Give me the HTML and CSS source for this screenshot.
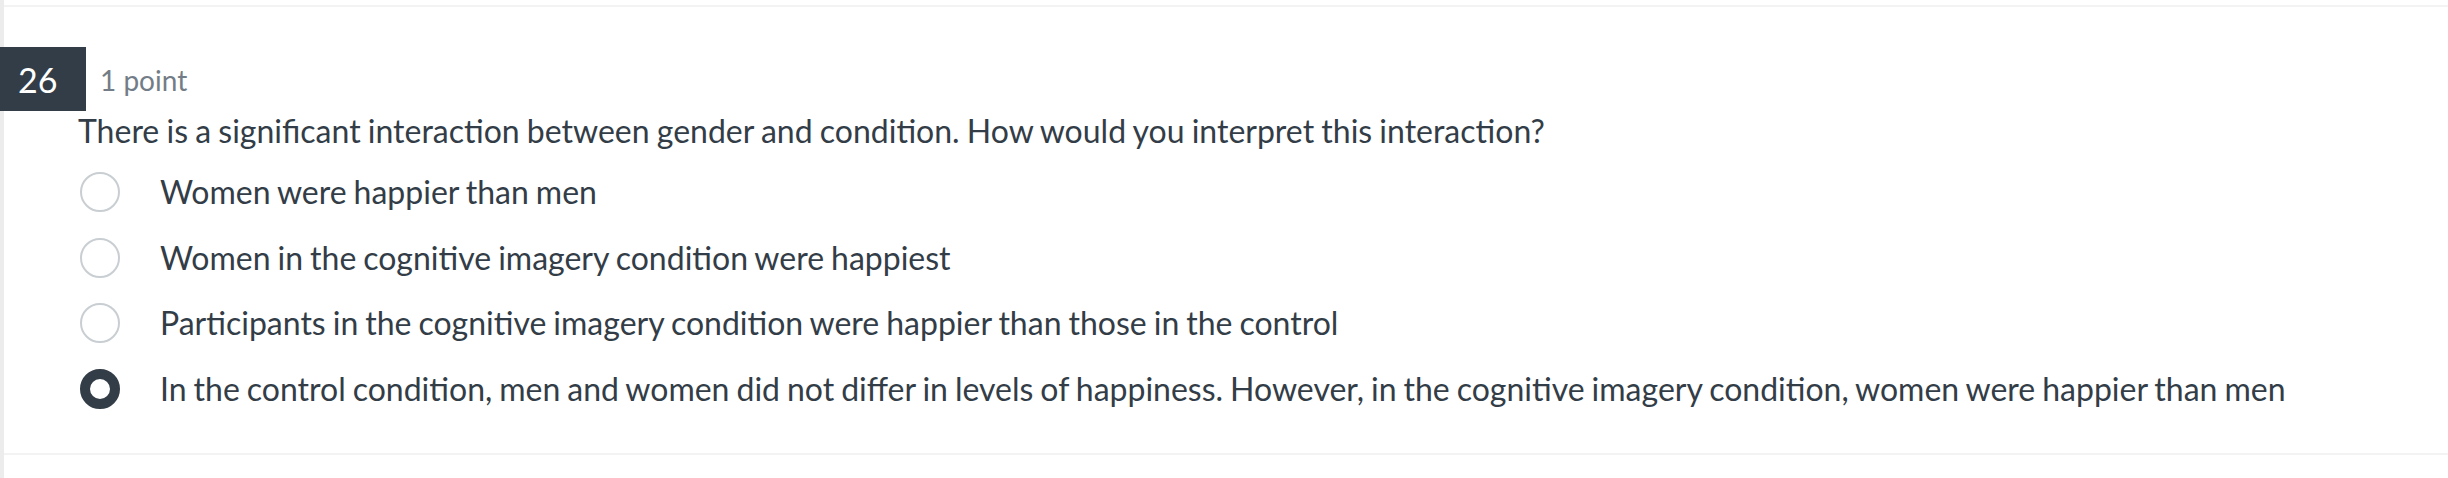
FILE: index.html
```html
<!DOCTYPE html>
<html lang="en">
<head>
<meta charset="utf-8">
<title>Question 26</title>
<link rel="stylesheet" href="styles.css">
</head>
<body>
<div class="page">
  <div class="prev-card"></div>
  <section class="question">
    <div class="q-head">
      <div class="q-num">26</div>
      <div class="q-points">1 point</div>
    </div>
    <div class="q-body">
      <p class="q-text">There is a significant interaction between gender and condition. How would you interpret this interaction?</p>
      <div class="options">
        <label class="option"><span class="radio"></span><span class="opt-text">Women were happier than men</span></label>
        <label class="option"><span class="radio"></span><span class="opt-text">Women in the cognitive imagery condition were happiest</span></label>
        <label class="option"><span class="radio"></span><span class="opt-text">Participants in the cognitive imagery condition were happier than those in the control</span></label>
        <label class="option"><span class="radio radio-checked"></span><span class="opt-text">In the control condition, men and women did not differ in levels of happiness. However, in the cognitive imagery condition, women were happier than men</span></label>
      </div>
    </div>
  </section>
</div>
</body>
</html>
```

FILE: styles.css
```css
html, body {
  margin: 0;
  padding: 0;
  background: #ffffff;
}

body {
  font-family: "Lato", "Liberation Sans", sans-serif;
  color: #333d47;
}

.page {
  border-left: 4px solid #ececec;
  min-height: 100vh;
  box-sizing: border-box;
}

.prev-card {
  height: 5px;
  border-bottom: 2px solid #f3f3f3;
}

.question {
  padding-top: 40px;
  padding-bottom: 44px;
  border-bottom: 2px solid #f3f3f3;
}

.q-head {
  display: flex;
  align-items: center;
  height: 64px;
}

.q-num {
  margin-left: -4px;
  width: 86px;
  height: 64px;
  box-sizing: border-box;
  padding-left: 18px;
  display: flex;
  align-items: center;
  background: #333d47;
  color: #ffffff;
  font-size: 34px;
}

.q-points {
  margin-left: 14px;
  padding-top: 2px;
  font-size: 28px;
  color: #737d87;
}

.q-body {
  padding-left: 74px;
}

.q-text {
  margin: 0;
  font-size: 32px;
  line-height: 40px;
  word-spacing: -1px;
}

.options {
  margin-top: 21px;
  display: flex;
  flex-direction: column;
  gap: 25.67px;
}

.option {
  display: flex;
  align-items: center;
  height: 40px;
  margin-left: 2px;
}

.radio {
  flex: none;
  width: 40px;
  height: 40px;
  box-sizing: border-box;
  border-radius: 50%;
  border: 2px solid #c9ced3;
  background: #ffffff;
}

.radio-checked {
  border: 10px solid #333d47;
  box-shadow: inset 0 0 0 1px rgba(255, 255, 255, 0.12);
}

.opt-text {
  margin-left: 40px;
  font-size: 32px;
  line-height: 40px;
  white-space: nowrap;
  word-spacing: -1.2px;
}
```
